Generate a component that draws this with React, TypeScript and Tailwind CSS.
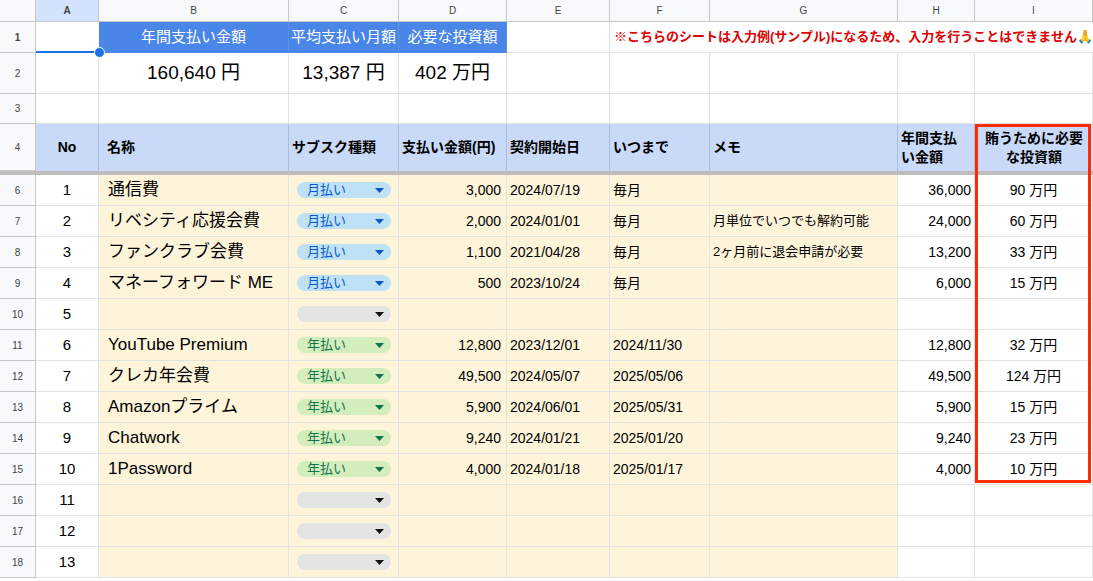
const COLS = "grid-cols-[36px_63px_190px_110px_108px_103px_100px_188px_77px_118px]";

type Row = { n: string; name: string; kind: "m" | "y" | ""; amt: string; start: string; end: string; memo: string; year: string; inv: string };

const rows: Row[] = [
  { n: "1", name: "通信費", kind: "m", amt: "3,000", start: "2024/07/19", end: "毎月", memo: "", year: "36,000", inv: "90 万円" },
  { n: "2", name: "リベシティ応援会費", kind: "m", amt: "2,000", start: "2024/01/01", end: "毎月", memo: "月単位でいつでも解約可能", year: "24,000", inv: "60 万円" },
  { n: "3", name: "ファンクラブ会費", kind: "m", amt: "1,100", start: "2021/04/28", end: "毎月", memo: "2ヶ月前に退会申請が必要", year: "13,200", inv: "33 万円" },
  { n: "4", name: "マネーフォワード ME", kind: "m", amt: "500", start: "2023/10/24", end: "毎月", memo: "", year: "6,000", inv: "15 万円" },
  { n: "5", name: "", kind: "", amt: "", start: "", end: "", memo: "", year: "", inv: "" },
  { n: "6", name: "YouTube Premium", kind: "y", amt: "12,800", start: "2023/12/01", end: "2024/11/30", memo: "", year: "12,800", inv: "32 万円" },
  { n: "7", name: "クレカ年会費", kind: "y", amt: "49,500", start: "2024/05/07", end: "2025/05/06", memo: "", year: "49,500", inv: "124 万円" },
  { n: "8", name: "Amazonプライム", kind: "y", amt: "5,900", start: "2024/06/01", end: "2025/05/31", memo: "", year: "5,900", inv: "15 万円" },
  { n: "9", name: "Chatwork", kind: "y", amt: "9,240", start: "2024/01/21", end: "2025/01/20", memo: "", year: "9,240", inv: "23 万円" },
  { n: "10", name: "1Password", kind: "y", amt: "4,000", start: "2024/01/18", end: "2025/01/17", memo: "", year: "4,000", inv: "10 万円" },
  { n: "11", name: "", kind: "", amt: "", start: "", end: "", memo: "", year: "", inv: "" },
  { n: "12", name: "", kind: "", amt: "", start: "", end: "", memo: "", year: "", inv: "" },
  { n: "13", name: "", kind: "", amt: "", start: "", end: "", memo: "", year: "", inv: "" },
];

const cell = "border-r border-b border-[#e2e2e2] flex items-center overflow-hidden whitespace-nowrap";
const rh = "bg-[#f8f9fa] border-r border-b border-[#c7c7c7] text-[10px] text-[#444] flex items-center justify-center";
const yel = "bg-[#fef4da]";

function Chip({ kind }: { kind: Row["kind"] }) {
  const bg = kind === "m" ? "bg-[#bfe1f6] text-[#0b57d0]" : kind === "y" ? "bg-[#d4edbc] text-[#11734b]" : "bg-[#e3e3e3]";
  const label = kind === "m" ? "月払い" : kind === "y" ? "年払い" : "";
  return (
    <div className={`${bg} w-[94px] h-[16px] rounded-full flex items-center justify-between pl-[10px] pr-[7px] text-[13px]`}>
      <span>{label}</span>
      <svg width="9" height="5" viewBox="0 0 9 5"><path d="M0 0h9L4.5 5z" fill={kind === "m" ? "#0b57d0" : kind === "y" ? "#11734b" : "#111"} /></svg>
    </div>
  );
}

export default function App() {
  const hdr = ["", "A", "B", "C", "D", "E", "F", "G", "H", "I"];
  return (
    <div className="relative w-[1093px] h-[581px] overflow-hidden bg-white text-[#000]" style={{ fontFamily: "Arial, 'Liberation Sans', 'Noto Sans CJK JP', sans-serif" }}>
      <div className={`grid ${COLS} h-[22px]`}>
        {hdr.map((h, i) => (
          <div key={i} className={`${i === 1 ? "bg-[#d3e3fd] font-bold" : "bg-[#f8f9fa]"} border-r border-b border-[#c7c7c7] text-[10px] text-[#444] flex items-center justify-center`}>{h}</div>
        ))}
      </div>
      <div className={`grid ${COLS} h-[31px]`}>
        <div className={`${rh} bg-[#d3e3fd] font-bold`}>1</div>
        <div className="border-b-2 border-[#1a73e8] relative">
          <div className="absolute right-[-6px] bottom-[-7px] w-[11px] h-[11px] rounded-full bg-[#1a73e8] border border-white z-10" />
        </div>
        {["年間支払い金額", "平均支払い月額", "必要な投資額"].map((t) => (
          <div key={t} className="bg-[#4a86e8] text-white text-[15px] flex items-center justify-center border-r border-[#5b8fe0] whitespace-nowrap">{t}</div>
        ))}
        <div className={cell}></div>
        <div className="col-span-4 border-b border-[#e2e2e2] flex items-center pl-[4px] text-[13px] font-bold text-[#e00000] whitespace-nowrap">
          ※こちらのシートは入力例(サンプル)になるため、入力を行うことはできません🙏
        </div>
      </div>
      <div className={`grid ${COLS} h-[41px]`}>
        <div className={rh}>2</div>
        <div className={cell}></div>
        <div className={`${cell} justify-center text-[19px]`}>160,640 円</div>
        <div className={`${cell} justify-center text-[19px]`}>13,387 円</div>
        <div className={`${cell} justify-center text-[19px]`}>402 万円</div>
        {[0, 1, 2, 3, 4].map((i) => <div key={i} className={cell}></div>)}
      </div>
      <div className={`grid ${COLS} h-[30px]`}>
        <div className={rh}>3</div>
        {[0, 1, 2, 3, 4, 5, 6, 7, 8].map((i) => <div key={i} className={cell}></div>)}
      </div>
      <div className={`grid ${COLS} h-[51px] border-b-[4px] border-[#bdbdbd]`}>
        <div className={rh}>4</div>
        {[
          ["No", "justify-center"],
          ["名称", "pl-[8px]"],
          ["サブスク種類", "pl-[3px]"],
          ["支払い金額(円)", "pl-[3px]"],
          ["契約開始日", "pl-[3px]"],
          ["いつまで", "pl-[3px]"],
          ["メモ", "pl-[3px]"],
        ].map(([t, c]) => (
          <div key={t} className={`bg-[#c9daf8] border-r border-[#a9bde0] flex items-center text-[14px] font-bold whitespace-nowrap ${c}`}>{t}</div>
        ))}
        <div className="bg-[#c9daf8] border-r border-[#a9bde0] flex items-center text-[14px] font-bold leading-[19px] pl-[3px]">年間支払<br />い金額</div>
        <div className="bg-[#c9daf8] flex items-center justify-center text-center text-[14px] font-bold leading-[19px]">賄うために必要<br />な投資額</div>
      </div>
      {rows.map((r, i) => (
        <div key={i} className={`grid ${COLS} h-[31px]`}>
          <div className={rh}>{i + 6}</div>
          <div className={`${cell} justify-center text-[15px]`}>{r.n}</div>
          <div className={`${cell} ${yel} pl-[9px] text-[17px]`}>{r.name}</div>
          <div className={`${cell} ${yel} pl-[8px]`}><Chip kind={r.kind} /></div>
          <div className={`${cell} ${yel} justify-end pr-[5px] text-[14px]`}>{r.amt}</div>
          <div className={`${cell} ${yel} pl-[3px] text-[14px]`}>{r.start}</div>
          <div className={`${cell} ${yel} pl-[3px] text-[14px]`}>{r.end}</div>
          <div className={`${cell} ${yel} pl-[3px] text-[13px]`}>{r.memo}</div>
          <div className={`${cell} justify-end pr-[3px] text-[14px]`}>{r.year}</div>
          <div className={`${cell} justify-center text-[14px]`}>{r.inv}</div>
        </div>
      ))}
      <div className="absolute left-[975px] top-[124px] w-[116px] h-[359px] border-[3px] border-[#ff2a00] pointer-events-none" />
    </div>
  );
}
